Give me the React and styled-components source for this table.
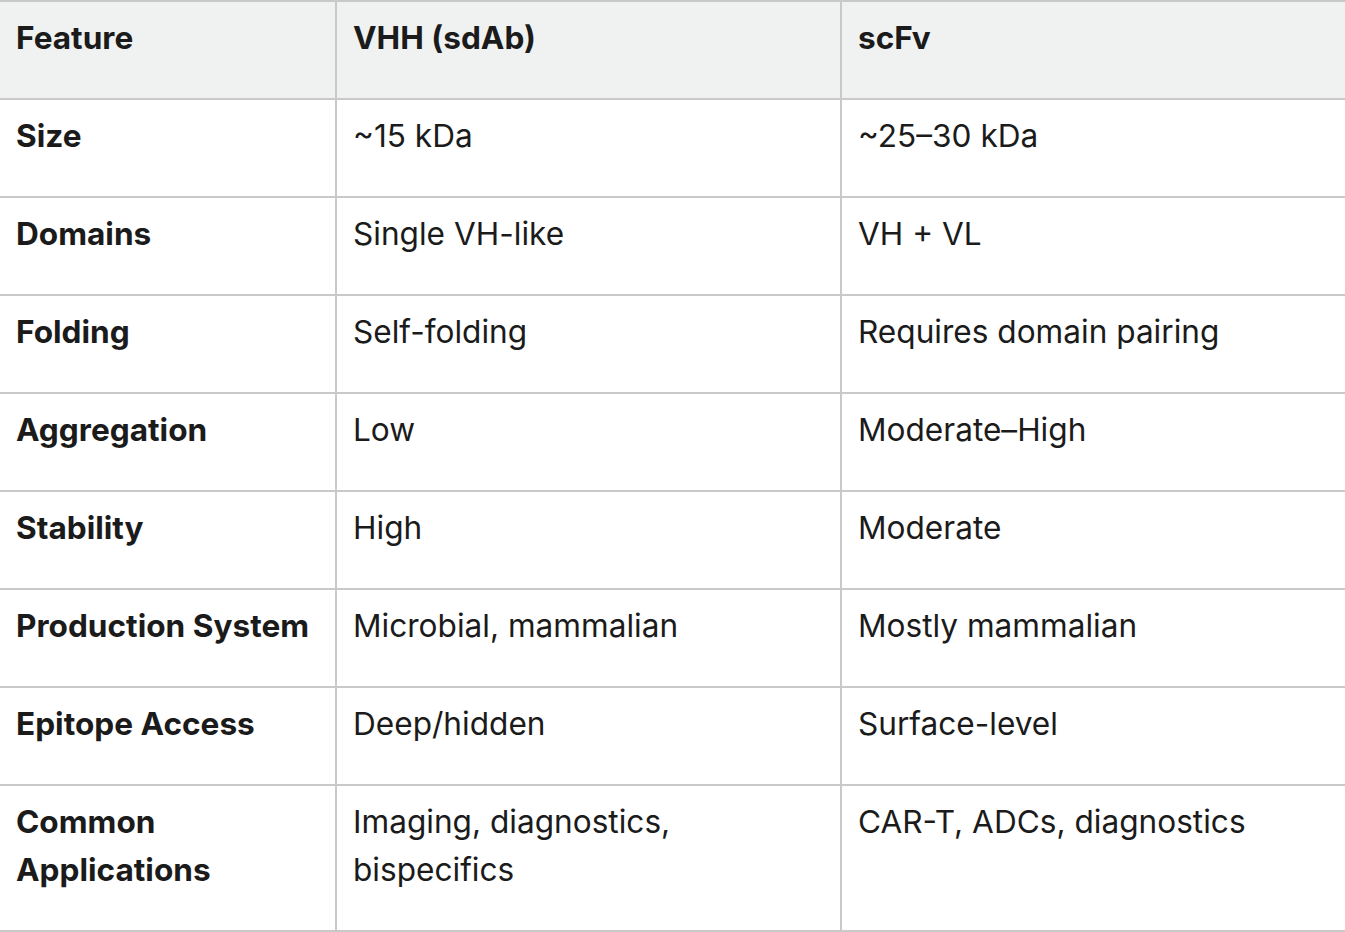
import React from 'react';
import styled, { createGlobalStyle } from 'styled-components';

const GlobalStyle = createGlobalStyle`
  body {
    margin: 0;
    background: #ffffff;
    font-family: Inter, "Noto Sans", sans-serif;
    color: #1b1b1b;
  }
`;

const Table = styled.div`
  display: grid;
  grid-template-columns: 335px 505px 1fr;
  width: 1345px;
  border-bottom: 2px solid #c9c9c9;
`;

const Cell = styled.div`
  border-top: 2px solid #c9c9c9;
  border-left: ${(p) => (p.$first ? 'none' : '2px solid #c9c9c9')};
  padding: 12px 16px 36px;
  font-size: 31.6px;
  line-height: 48px;
  font-weight: ${(p) => (p.$bold ? 700 : 400)};
  background: ${(p) => (p.$head ? '#f0f2f2' : '#ffffff')};
`;

const header = ['Feature', 'VHH (sdAb)', 'scFv'];

const rows = [
  ['Size', '~15 kDa', '~25–30 kDa'],
  ['Domains', 'Single VH-like', 'VH + VL'],
  ['Folding', 'Self-folding', 'Requires domain pairing'],
  ['Aggregation', 'Low', 'Moderate–High'],
  ['Stability', 'High', 'Moderate'],
  ['Production System', 'Microbial, mammalian', 'Mostly mammalian'],
  ['Epitope Access', 'Deep/hidden', 'Surface-level'],
  ['Common Applications', 'Imaging, diagnostics, bispecifics', 'CAR-T, ADCs, diagnostics'],
];

export default function App() {
  return (
    <>
      <GlobalStyle />
      <Table>
        {header.map((h, i) => (
          <Cell key={h} $head $bold $first={i === 0}>
            {h}
          </Cell>
        ))}
        {rows.map((r) =>
          r.map((c, i) => (
            <Cell key={r[0] + i} $bold={i === 0} $first={i === 0}>
              {c}
            </Cell>
          ))
        )}
      </Table>
    </>
  );
}
